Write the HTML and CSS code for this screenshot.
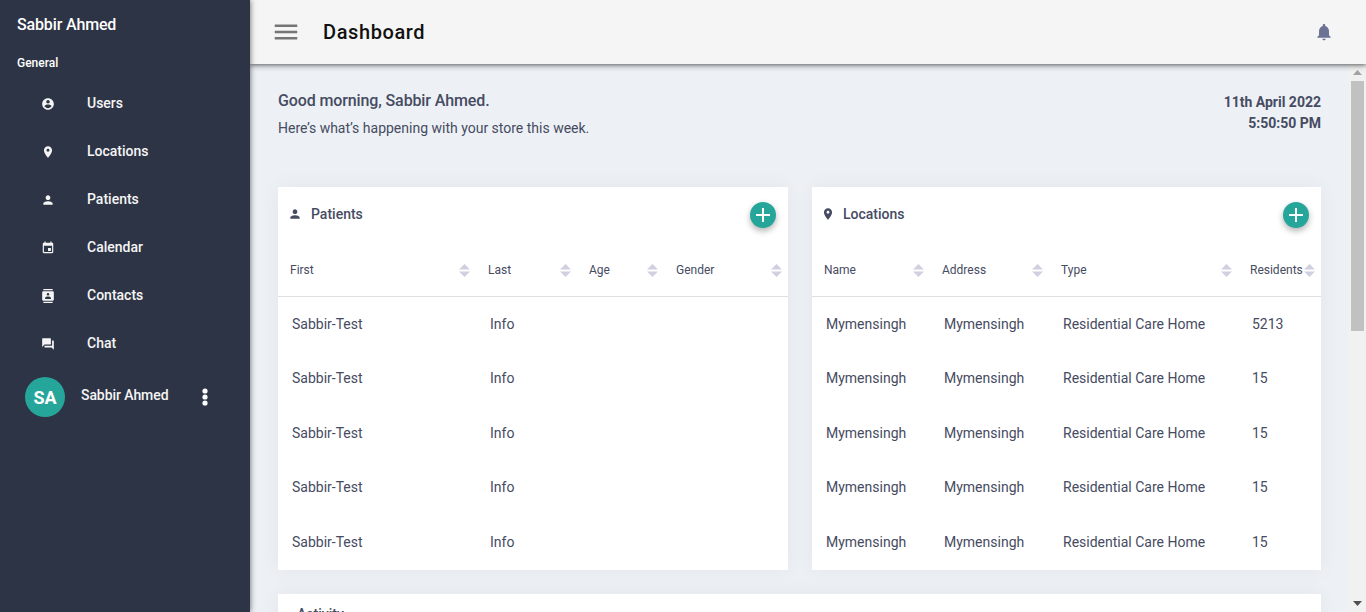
FILE: index.html
```html
<!DOCTYPE html>
<html lang="en">
<head>
  <meta charset="UTF-8">
  <title>Dashboard</title>
  <link rel="stylesheet" href="styles.css">
</head>
<body>

  <svg class="sprite" aria-hidden="true">
    <symbol id="i-person" viewBox="0 0 24 24"><path d="M12 12c2.21 0 4-1.79 4-4s-1.79-4-4-4-4 1.79-4 4 1.79 4 4 4zm0 2c-2.67 0-8 1.34-8 4v2h16v-2c0-2.66-5.33-4-8-4z"/></symbol>
    <symbol id="i-place" viewBox="0 0 24 24"><path d="M12 2C8.13 2 5 5.13 5 9c0 5.25 7 13 7 13s7-7.75 7-13c0-3.87-3.13-7-7-7zm0 9.5c-1.38 0-2.5-1.12-2.5-2.5s1.12-2.5 2.5-2.5 2.5 1.12 2.5 2.5-1.12 2.5-2.5 2.5z"/></symbol>
    <symbol id="i-add" viewBox="0 0 24 24"><path d="M19 13h-6v6h-2v-6H5v-2h6V5h2v6h6v2z"/></symbol>
    <symbol id="i-sort" viewBox="0 0 10 13" preserveAspectRatio="none"><path d="M0 5.5 5 0l5 5.5zM0 7.5h10L5 13z"/></symbol>
  </svg>

  <aside class="sidebar">
    <div class="brand">Sabbir Ahmed</div>
    <div class="nav-label">General</div>
    <nav class="nav">
      <a class="nav-item"><svg class="icon" viewBox="0 0 24 24"><path d="M12 2C6.48 2 2 6.48 2 12s4.48 10 10 10 10-4.48 10-10S17.52 2 12 2zm0 3c1.66 0 3 1.34 3 3s-1.34 3-3 3-3-1.34-3-3 1.34-3 3-3zm0 14.2c-2.5 0-4.71-1.28-6-3.22.03-1.99 4-3.08 6-3.08 1.99 0 5.97 1.09 6 3.08-1.29 1.94-3.5 3.22-6 3.22z"/></svg><span>Users</span></a>
      <a class="nav-item"><svg class="icon"><use href="#i-place"/></svg><span>Locations</span></a>
      <a class="nav-item"><svg class="icon"><use href="#i-person"/></svg><span>Patients</span></a>
      <a class="nav-item"><svg class="icon" viewBox="0 0 24 24"><path d="M17 12h-5v5h5v-5zM16 1v2H8V1H6v2H5c-1.11 0-1.99.9-1.99 2L3 19c0 1.1.89 2 2 2h14c1.1 0 2-.9 2-2V5c0-1.1-.9-2-2-2h-1V1h-2zm3 18H5V8h14v11z"/></svg><span>Calendar</span></a>
      <a class="nav-item"><svg class="icon" viewBox="0 0 24 24"><path d="M20 0H4v2h16V0zM4 24h16v-2H4v2zM20 4H4c-1.1 0-2 .9-2 2v12c0 1.1.9 2 2 2h16c1.1 0 2-.9 2-2V6c0-1.1-.9-2-2-2zm-8 2.75c1.24 0 2.25 1.01 2.25 2.25s-1.01 2.25-2.25 2.25S9.75 10.24 9.75 9 10.76 6.75 12 6.75zM17 17H7v-1.5c0-1.67 3.33-2.5 5-2.5s5 .83 5 2.5V17z"/></svg><span>Contacts</span></a>
      <a class="nav-item"><svg class="icon" viewBox="0 0 24 24"><path d="M21 6h-2v9H6v2c0 .55.45 1 1 1h11l4 4V7c0-.55-.45-1-1-1zm-4 6V3c0-.55-.45-1-1-1H3c-.55 0-1 .45-1 1v14l4-4h10c.55 0 1-.45 1-1z"/></svg><span>Chat</span></a>
    </nav>
    <div class="profile">
      <div class="avatar">SA</div>
      <div class="profile-name">Sabbir Ahmed</div>
      <svg class="more" viewBox="0 0 24 24"><circle cx="12" cy="6" r="2.6"/><circle cx="12" cy="12" r="2.6"/><circle cx="12" cy="18" r="2.6"/></svg>
    </div>
  </aside>

  <div class="page">
    <header class="topbar">
      <svg class="menu" viewBox="0 0 24 24"><path d="M3 18h18v-2H3v2zm0-5h18v-2H3v2zm0-7v2h18V6H3z"/></svg>
      <h1>Dashboard</h1>
      <svg class="bell" viewBox="0 0 24 24"><path d="M12 22c1.1 0 2-.9 2-2h-4c0 1.1.89 2 2 2zm6-6v-5c0-3.07-1.64-5.64-4.5-6.32V4c0-.83-.67-1.5-1.5-1.5s-1.5.67-1.5 1.5v.68C7.63 5.36 6 7.92 6 11v5l-2 2v1h16v-1l-2-2z"/></svg>
    </header>

    <div class="page-body">
      <main class="content">
        <section class="welcome">
          <div>
            <div class="greeting">Good morning, Sabbir Ahmed.</div>
            <div class="subtitle">Here’s what’s happening with your store this week.</div>
          </div>
          <div class="clock">11th April 2022<br>5:50:50 PM</div>
        </section>

        <section class="cards">
          <div class="card">
            <div class="card-head">
              <div class="card-title"><svg class="icon"><use href="#i-person"/></svg>Patients</div>
              <button class="fab"><svg><use href="#i-add"/></svg></button>
            </div>
            <table>
              <colgroup>
                <col class="w-198"><col class="w-101"><col class="w-87"><col>
              </colgroup>
              <thead>
                <tr>
                  <th><div class="th-in">First<svg class="sort"><use href="#i-sort"/></svg></div></th>
                  <th><div class="th-in">Last<svg class="sort"><use href="#i-sort"/></svg></div></th>
                  <th><div class="th-in">Age<svg class="sort"><use href="#i-sort"/></svg></div></th>
                  <th><div class="th-in">Gender<svg class="sort"><use href="#i-sort"/></svg></div></th>
                </tr>
              </thead>
              <tbody>
                <tr><td>Sabbir-Test</td><td>Info</td><td></td><td></td></tr>
                <tr><td>Sabbir-Test</td><td>Info</td><td></td><td></td></tr>
                <tr><td>Sabbir-Test</td><td>Info</td><td></td><td></td></tr>
                <tr><td>Sabbir-Test</td><td>Info</td><td></td><td></td></tr>
                <tr><td>Sabbir-Test</td><td>Info</td><td></td><td></td></tr>
              </tbody>
            </table>
          </div>

          <div class="card">
            <div class="card-head">
              <div class="card-title card-title-place"><svg class="icon"><use href="#i-place"/></svg>Locations</div>
              <button class="fab"><svg><use href="#i-add"/></svg></button>
            </div>
            <table>
              <colgroup>
                <col class="w-118"><col class="w-119"><col class="w-189"><col>
              </colgroup>
              <thead>
                <tr>
                  <th><div class="th-in">Name<svg class="sort"><use href="#i-sort"/></svg></div></th>
                  <th><div class="th-in">Address<svg class="sort"><use href="#i-sort"/></svg></div></th>
                  <th><div class="th-in">Type<svg class="sort"><use href="#i-sort"/></svg></div></th>
                  <th><div class="th-in">Residents<svg class="sort"><use href="#i-sort"/></svg></div></th>
                </tr>
              </thead>
              <tbody>
                <tr><td>Mymensingh</td><td>Mymensingh</td><td>Residential Care Home</td><td>5213</td></tr>
                <tr><td>Mymensingh</td><td>Mymensingh</td><td>Residential Care Home</td><td>15</td></tr>
                <tr><td>Mymensingh</td><td>Mymensingh</td><td>Residential Care Home</td><td>15</td></tr>
                <tr><td>Mymensingh</td><td>Mymensingh</td><td>Residential Care Home</td><td>15</td></tr>
                <tr><td>Mymensingh</td><td>Mymensingh</td><td>Residential Care Home</td><td>15</td></tr>
              </tbody>
            </table>
          </div>
        </section>

        <section class="card activity">
          <div class="activity-title">Activity</div>
        </section>
      </main>

      <div class="scrollbar">
        <div class="scroll-btn"><svg class="arrow arrow-up" viewBox="0 0 9 5"><path d="M0 5 4.5 0 9 5z"/></svg></div>
        <div class="scroll-thumb"></div>
        <div class="scroll-btn"><svg class="arrow arrow-down" viewBox="0 0 9 5"><path d="M0 0h9L4.5 5z"/></svg></div>
      </div>
    </div>
  </div>

</body>
</html>
```

FILE: styles.css
```css
* {
  box-sizing: border-box;
}
body {
  font-family: Roboto, sans-serif;
  background-color: #edf1f5;
  color: #464b62;
  display: flex;
  height: 100vh;
  margin: 0;
  overflow: hidden;
}
.sprite {
  display: none;
}
.icon {
  width: 14px;
  height: 14px;
  fill: currentColor;
  flex: none;
}

/* sidebar */
.sidebar {
  width: 250px;
  flex: none;
  background-color: #2d3446;
  color: #f5f5f5;
  box-shadow: 0 0 6px rgba(0, 0, 0, 0.6);
  z-index: 2;
}
.brand {
  font-size: 16px;
  font-weight: 500;
  letter-spacing: -0.15px;
  line-height: 24px;
  color: #fff;
  padding: 13px 17px 0;
}
.nav-label {
  font-size: 12px;
  font-weight: 500;
  line-height: 18px;
  color: #fff;
  padding: 17px 17px 0;
}
.nav {
  padding-top: 8px;
}
.nav-item {
  display: flex;
  align-items: center;
  gap: 32px;
  height: 48px;
  padding-left: 41px;
  font-size: 14px;
  font-weight: 500;
}
.nav-item span {
  margin-top: -2px;
}
.profile {
  display: flex;
  align-items: center;
  padding: 9px 0 0 25px;
}
.avatar {
  width: 40px;
  height: 40px;
  border-radius: 50%;
  background-color: #26a69a;
  color: #fff;
  font-size: 18px;
  font-weight: 700;
  display: flex;
  align-items: center;
  justify-content: center;
}
.profile-name {
  width: 112px;
  margin-left: 16px;
  margin-top: -4px;
  font-size: 14px;
  font-weight: 500;
  letter-spacing: -0.08px;
}
.more {
  width: 24px;
  height: 24px;
  fill: #fff;
}

/* top bar */
.page {
  flex: 1;
  min-width: 0;
  display: flex;
  flex-direction: column;
}
.topbar {
  height: 64px;
  flex: none;
  display: flex;
  align-items: center;
  background-color: #f5f5f5;
  box-shadow: 0 1px 4px rgba(0, 0, 0, 0.5), 0 3px 6px rgba(0, 0, 0, 0.15);
  padding: 0 32px 0 21px;
  z-index: 1;
}
.menu {
  width: 30px;
  height: 30px;
  fill: #757575;
}
.topbar h1 {
  flex: 1;
  margin: 0 0 0 22px;
  font-size: 20px;
  font-weight: 500;
  letter-spacing: 0.6px;
  color: #111;
}
.bell {
  width: 20px;
  height: 20px;
  fill: #6c7293;
}

/* main area */
.page-body {
  flex: 1;
  min-height: 0;
  display: flex;
}
.content {
  flex: 1;
  min-width: 0;
  overflow: hidden;
  padding: 25px 28px 24px;
}
.scrollbar {
  width: 17px;
  flex: none;
  display: flex;
  flex-direction: column;
  justify-content: space-between;
  background-color: #f1f1f1;
}
.scroll-btn {
  height: 17px;
  flex: none;
  display: flex;
  align-items: center;
  justify-content: center;
}
.scroll-thumb {
  height: 250px;
  margin: 0 2px auto;
  background-color: #c1c1c1;
}
.arrow {
  width: 9px;
  height: 5px;
}
.arrow-up {
  fill: #a3a3a3;
}
.arrow-down {
  fill: #505050;
}
.welcome {
  display: flex;
  justify-content: space-between;
  margin-bottom: 49px;
}
.greeting {
  font-size: 16px;
  font-weight: 500;
  letter-spacing: -0.12px;
  line-height: 24px;
}
.subtitle {
  font-size: 14px;
  line-height: 20px;
  margin-top: 5px;
}
.clock {
  font-size: 14px;
  font-weight: 700;
  line-height: 21px;
  text-align: right;
  margin-top: 3px;
}

/* cards */
.cards {
  display: grid;
  grid-template-columns: 510px 1fr;
  gap: 24px;
}
.card {
  background-color: #fff;
  box-shadow: 0 0 20px rgba(0, 0, 0, 0.05);
}
.card-head {
  height: 55px;
  display: flex;
  align-items: center;
  justify-content: space-between;
  padding: 0 12px 0 10px;
}
.card-title {
  display: flex;
  align-items: center;
  gap: 9px;
  font-size: 14px;
  font-weight: 500;
  margin-top: -1px;
}
.card-title-place {
  gap: 8px;
  margin-left: -1px;
}
.fab {
  width: 26px;
  height: 26px;
  padding: 1px;
  border: none;
  border-radius: 50%;
  background-color: #26a69a;
  box-shadow: 0 3px 6px rgba(0, 0, 0, 0.3);
  margin-top: 1px;
}
.fab svg {
  display: block;
  width: 24px;
  height: 24px;
  fill: #fff;
}
table {
  width: 100%;
  table-layout: fixed;
  border-collapse: separate;
  border-spacing: 0;
}
.w-198 { width: 198px; }
.w-101 { width: 101px; }
.w-87 { width: 87px; }
.w-118 { width: 118px; }
.w-119 { width: 119px; }
.w-189 { width: 189px; }
th {
  height: 55px;
  padding: 2px 0 0;
  border-bottom: 1px solid #e0e0e0;
  font-size: 12px;
  font-weight: 400;
  text-align: left;
}
.th-in {
  display: flex;
  align-items: center;
  justify-content: space-between;
  padding: 0 6px 0 12px;
}
.sort {
  width: 11px;
  height: 13px;
  fill: #d0d0e0;
  flex: none;
}
td {
  height: 54.6px;
  padding: 0 0 1.5px 14px;
  font-size: 14px;
  white-space: nowrap;
}
.activity {
  margin-top: 24px;
  min-height: 573px;
  padding: 12px 19px;
}
.activity-title {
  font-size: 14px;
  font-weight: 500;
}
```
